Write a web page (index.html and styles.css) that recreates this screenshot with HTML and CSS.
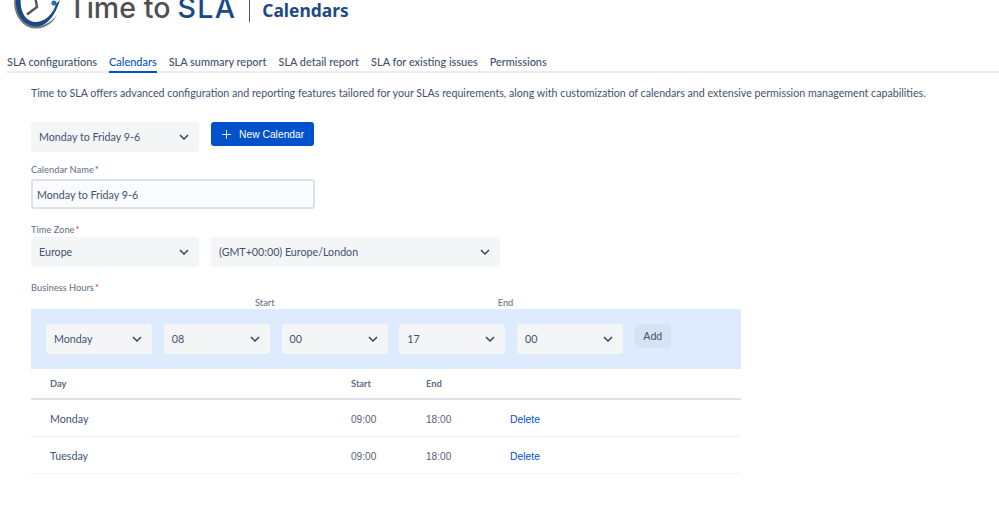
FILE: index.html
```html
<!DOCTYPE html>
<html lang="en">
<head>
<meta charset="utf-8">
<title>Calendars</title>
<link rel="stylesheet" href="styles.css">
</head>
<body>
<header class="brand">
  <svg class="logo" width="55" height="31" viewBox="13 0 55 31" aria-hidden="true">
    <path d="M16 -8 C10 8 19 28 36 28.5 C47 28.5 54 21 57 15 C50 23 43 26.5 36 26 C22 25 14 10 18 -8 Z" fill="#77787c"/>
    <path d="M17.5 -8 C12 8 21 26 36 26.5 C48 26.5 56 13 60 0 L56 4 C54 12 46 22 36 22 C25 22 18 10 21.5 -8 Z" fill="#174a86"/>
    <path d="M35 -4 L37 7 L27 14.5" fill="none" stroke="#55565a" stroke-width="2.4"/>
    <circle cx="54" cy="3" r="2.6" fill="#2a6cae"/>
  </svg>
  <div class="wordmark"><span class="time">Time to</span> <span class="sla">SLA</span></div>
  <span class="divider"></span>
  <h1 class="page-title">Calendars</h1>
</header>

<nav class="tabs">
  <a class="tab">SLA configurations</a>
  <a class="tab active">Calendars</a>
  <a class="tab">SLA summary report</a>
  <a class="tab">SLA detail report</a>
  <a class="tab">SLA for existing issues</a>
  <a class="tab">Permissions</a>
</nav>

<main class="content">
  <p class="intro">Time to SLA offers advanced configuration and reporting features tailored for your SLAs requirements, along with customization of calendars and extensive permission management capabilities.</p>

  <div class="row top-row">
    <div class="select w168"><span>Monday to Friday 9-6</span><svg class="chev" viewBox="0 0 10 6"><path d="M1 1l4 4 4-4"/></svg></div>
    <button class="primary"><svg class="plus" viewBox="0 0 10 10"><path d="M5 0v10M0 5h10"/></svg>New Calendar</button>
  </div>

  <label class="label name-label">Calendar Name<b>*</b></label>
  <div class="input">Monday to Friday 9-6</div>

  <label class="label tz-label">Time Zone<b>*</b></label>
  <div class="row tz-row">
    <div class="select w168"><span>Europe</span><svg class="chev" viewBox="0 0 10 6"><path d="M1 1l4 4 4-4"/></svg></div>
    <div class="select w289"><span>(GMT+00:00) Europe/London</span><svg class="chev" viewBox="0 0 10 6"><path d="M1 1l4 4 4-4"/></svg></div>
  </div>

  <label class="label bh-label">Business Hours<b>*</b></label>
  <div class="captions"><span>Start</span><span>End</span></div>

  <section class="panel">
    <div class="select w106"><span>Monday</span><svg class="chev" viewBox="0 0 10 6"><path d="M1 1l4 4 4-4"/></svg></div>
    <div class="select w106"><span>08</span><svg class="chev" viewBox="0 0 10 6"><path d="M1 1l4 4 4-4"/></svg></div>
    <div class="select w106"><span>00</span><svg class="chev" viewBox="0 0 10 6"><path d="M1 1l4 4 4-4"/></svg></div>
    <div class="select w106"><span>17</span><svg class="chev" viewBox="0 0 10 6"><path d="M1 1l4 4 4-4"/></svg></div>
    <div class="select w106"><span>00</span><svg class="chev" viewBox="0 0 10 6"><path d="M1 1l4 4 4-4"/></svg></div>
    <button class="add">Add</button>
  </section>

  <table class="hours">
    <thead>
      <tr><th class="c-day">Day</th><th class="c-start">Start</th><th class="c-end">End</th><th></th></tr>
    </thead>
    <tbody>
      <tr><td class="day">Monday</td><td class="time-cell">09:00</td><td class="time-cell">18:00</td><td><a class="del">Delete</a></td></tr>
      <tr><td class="day">Tuesday</td><td class="time-cell">09:00</td><td class="time-cell">18:00</td><td><a class="del">Delete</a></td></tr>
    </tbody>
  </table>
</main>
</body>
</html>
```

FILE: styles.css
```css
* { box-sizing: border-box; }
html, body { margin: 0; padding: 0; background: #fff; overflow: hidden; }
body {
  width: 999px;
  height: 505px;
  font-family: "Lato", "Noto Sans", sans-serif;
  color: #42526e;
  font-size: 11px;
}
.brand {
  height: 31px;
  display: flex;
  align-items: flex-start;
  padding-left: 13px;
  overflow: hidden;
}
.logo { overflow: visible; flex: none; width: 55px; height: 31px; }
.wordmark {
  font-family: "Inter", sans-serif;
  font-size: 28.6px;
  line-height: 30px;
  margin-top: -7px;
  white-space: pre;
}
.time { color: #4f5053; font-weight: 500; }
.sla { color: #174a86; font-weight: 500; letter-spacing: 1.3px; margin-left: -1px; }
.divider { width: 1px; height: 22px; background: #555; margin: 0 12px 0 13px; }
.page-title {
  margin: 0;
  font-family: "Noto Sans", sans-serif;
  font-size: 17.4px;
  line-height: 20px;
  font-weight: 700;
  color: #1c4a82;
}
.tabs {
  margin-top: 22px;
  height: 20px;
  margin-left: 7px;
  display: flex;
  gap: 12px;
  border-bottom: 2px solid #ebecf0;
}
.tab {
  height: 20px;
  font-size: 10.93px;
  line-height: 17px;
  font-weight: 500;
  color: #42526e;
  white-space: nowrap;
}
.tab.active { color: #0052cc; border-bottom: 2px solid #0052cc; }
.content { padding-left: 31px; width: 741px; }
.intro {
  margin: 12px 0 0;
  width: 960px;
  font-size: 10.66px;
  line-height: 16px;
  color: #42526e;
  white-space: nowrap;
}
.row { display: flex; gap: 12px; align-items: flex-start; }
.top-row { margin-top: 21px; }
.select {
  height: 30px;
  background: #f4f5f7;
  border-radius: 3px;
  display: flex;
  align-items: center;
  justify-content: space-between;
  padding: 0 10px 0 8px;
  font-size: 10.7px;
  color: #42526e;
  white-space: nowrap;
  flex: none;
}
.select span { margin-bottom: 2px; }
.w168 { width: 168px; }
.w289 { width: 289px; }
.w106 { width: 106px; }
.chev { width: 10px; height: 6px; fill: none; stroke: #344563; stroke-width: 1.5; }
.primary {
  width: 103px;
  height: 24px;
  border: 0;
  border-radius: 3px;
  background: #0052cc;
  color: #fff;
  font-family: "Liberation Sans", sans-serif;
  font-size: 10.3px;
  display: flex;
  align-items: center;
  padding: 0 0 0 11px;
}
.plus { width: 9px; height: 9px; stroke: #fff; stroke-width: 1; margin-right: 8px; }
.label { display: block; font-size: 9.3px; line-height: 12px; color: #6b778c; font-weight: 500; }
.label b { color: #de350b; font-weight: 400; margin-left: 1px; }
.name-label { margin-top: 12px; }
.input {
  margin-top: 3px;
  width: 284px;
  height: 30px;
  border: 2px solid #dfe1e6;
  border-radius: 3px;
  background: #fafbfc;
  padding: 0 4px;
  font-size: 10.7px;
  line-height: 28px;
  color: #42526e;
}
.tz-label { margin-top: 15px; }
.tz-row { margin-top: 1px; }
.bh-label { margin-top: 15px; }
.captions { height: 13px; font-size: 9.3px; line-height: 14px; font-weight: 500; color: #6b778c; margin-top: 2px; display: flex; padding-left: 224px; gap: 223px; }
.panel {
  width: 710px;
  height: 60px;
  background: #deebff;
  display: flex;
  align-items: flex-start;
  gap: 11.75px;
  padding: 15px;
}
.add {
  width: 36px;
  height: 24px;
  border: 0;
  border-radius: 3px;
  background: #d5e3f7;
  color: #42526e;
  font-family: "Liberation Sans", sans-serif;
  font-size: 10.6px;
  padding: 0 0 1px;
}
.hours { width: 710px; border-collapse: collapse; table-layout: fixed; }
.hours th {
  height: 30px;
  border-bottom: 2px solid #dfe1e6;
  text-align: left;
  font-size: 9.3px;
  font-weight: 700;
  color: #5e6c84;
  padding: 0;
}
.hours td {
  height: 37px;
  border-bottom: 1px solid #f0f1f4;
  font-size: 10.7px;
  padding: 2px 0 0;
}
.c-day { width: 320px; padding-left: 19px !important; }
.c-start { width: 75px; }
.c-end { width: 84px; }
.day { padding-left: 19px !important; color: #42526e; }
.time-cell { font-family: "Liberation Sans", sans-serif; font-size: 10.1px !important; color: #5a6270; padding-top: 4px !important; }
.del { font-family: "Liberation Sans", sans-serif; font-size: 10.4px; color: #0052cc; }
```
